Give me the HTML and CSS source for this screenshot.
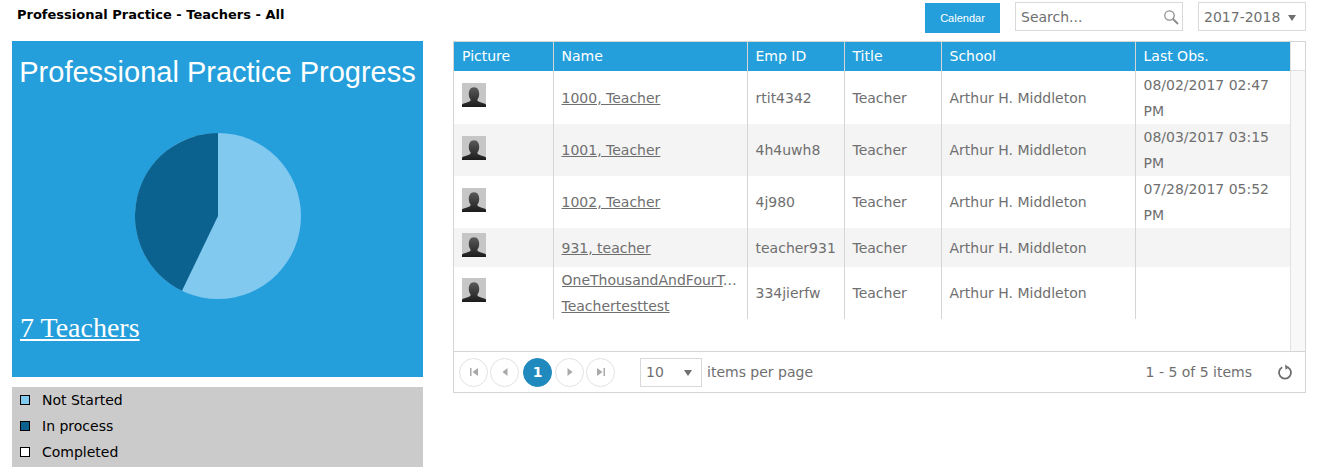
FILE: index.html
```html
<!DOCTYPE html>
<html lang="en">
<head>
<meta charset="utf-8">
<title>Professional Practice - Teachers - All</title>
<link rel="stylesheet" href="styles.css">
</head>
<body>
<svg class="defs" width="0" height="0" aria-hidden="true">
  <defs>
    <linearGradient id="sil" x1="0" y1="0" x2="0" y2="1">
      <stop offset="0" stop-color="#5a5a5a"/>
      <stop offset="1" stop-color="#1c1c1c"/>
    </linearGradient>
    <symbol id="avatar" viewBox="0 0 24 24">
      <rect width="24" height="24" fill="#c6c6c6"/>
      <path d="M0 24v-2.6c2-1.2 5-1.700 7.500-2.900 1-.5 1.300-1.300 1-2.200-1.100-1.300-1.700-3-1.700-5.300 0-4 1.700-6.800 5.200-6.800s5.200 2.800 5.200 6.800c0 2.300-.6 4-1.700 5.300-.3.900 0 1.700 1 2.200 2.500 1.200 5.500 1.700 7.500 2.900V24z" fill="url(#sil)"/>
    </symbol>
  </defs>
</svg>
<header class="topbar">
  <h1 class="page-title">Professional Practice - Teachers - All</h1>
  <div class="tools">
    <button class="calendar-btn" type="button">Calendar</button>
    <div class="search">
      <span class="search-text">Search...</span>
      <svg class="search-icon" viewBox="0 0 16 16" width="16" height="16"><circle cx="6.500" cy="6.500" r="4.700" fill="none" stroke="#8a8a8a" stroke-width="1.200"/><path d="M10 10l5 5" stroke="#8a8a8a" stroke-width="1.800"/></svg>
    </div>
    <div class="year-select"><span>2017-2018</span><span class="caret"></span></div>
  </div>
</header>
<main class="layout">
  <section class="left">
    <div class="progress-card">
      <h2 class="progress-title">Professional Practice Progress</h2>
      <svg class="pie" viewBox="0 0 166 166" width="166" height="166">
        <circle cx="83" cy="83" r="83" fill="#81c9ef"/>
        <path d="M83 83L47 157.800A83 83 0 0 1 83 0z" fill="#0b628f"/>
      </svg>
      <a class="teachers-link" href="#">7 Teachers</a>
    </div>
    <ul class="legend">
      <li class="legend-item"><span class="swatch swatch-light"></span>Not Started</li>
      <li class="legend-item"><span class="swatch swatch-dark"></span>In process</li>
      <li class="legend-item"><span class="swatch swatch-white"></span>Completed</li>
    </ul>
  </section>
  <section class="grid">
    <div class="grid-main">
      <div class="grid-tablewrap">
        <table class="teachers">
          <colgroup><col class="c1"><col class="c2"><col class="c3"><col class="c4"><col class="c5"><col class="c6"></colgroup>
          <thead>
            <tr><th>Picture</th><th>Name</th><th>Emp ID</th><th>Title</th><th>School</th><th>Last Obs.</th></tr>
          </thead>
          <tbody>
            <tr class="tall"><td class="pic"><svg class="avatar"><use href="#avatar"/></svg></td><td><a href="#">1000, Teacher</a></td><td>rtit4342</td><td>Teacher</td><td>Arthur H. Middleton</td><td>08/02/2017 02:47 PM</td></tr>
            <tr class="tall alt"><td class="pic"><svg class="avatar"><use href="#avatar"/></svg></td><td><a href="#">1001, Teacher</a></td><td>4h4uwh8</td><td>Teacher</td><td>Arthur H. Middleton</td><td>08/03/2017 03:15 PM</td></tr>
            <tr class="tall"><td class="pic"><svg class="avatar"><use href="#avatar"/></svg></td><td><a href="#">1002, Teacher</a></td><td>4j980</td><td>Teacher</td><td>Arthur H. Middleton</td><td>07/28/2017 05:52 PM</td></tr>
            <tr class="short alt"><td class="pic"><svg class="avatar"><use href="#avatar"/></svg></td><td><a href="#">931, teacher</a></td><td>teacher931</td><td>Teacher</td><td>Arthur H. Middleton</td><td></td></tr>
            <tr class="tall"><td class="pic"><svg class="avatar"><use href="#avatar"/></svg></td><td><a class="clip" href="#">OneThousandAndFourTeacher,</a><a href="#">Teachertesttest</a></td><td>334jierfw</td><td>Teacher</td><td>Arthur H. Middleton</td><td></td></tr>
          </tbody>
        </table>
      </div>
      <div class="scroll-col"><div class="scroll-head"></div><div class="scroll-track"></div></div>
    </div>
    <footer class="pager">
      <div class="pager-left">
        <span class="page-btn"><svg viewBox="0 0 10 10" width="10" height="10"><path d="M1 1h1.500v8H1zM9 1v8L3.500 5z"/></svg></span>
        <span class="page-btn"><svg viewBox="0 0 10 10" width="10" height="10"><path d="M7.500 1v8L2.500 5z"/></svg></span>
        <span class="page-btn current">1</span>
        <span class="page-btn"><svg viewBox="0 0 10 10" width="10" height="10"><path d="M2.500 1v8l5-4z"/></svg></span>
        <span class="page-btn"><svg viewBox="0 0 10 10" width="10" height="10"><path d="M1 1v8l5.500-4zM7.500 1H9v8H7.500z"/></svg></span>
        <div class="size-select"><span>10</span><span class="caret"></span></div>
        <span class="per-page">items per page</span>
      </div>
      <div class="pager-right">
        <span class="page-info">1 - 5 of 5 items</span>
        <svg class="refresh" viewBox="0 0 16 16" width="16" height="16"><path d="M5.200 3.300A6 6 0 1 0 10.800 3.300" fill="none" stroke="#6d6d6d" stroke-width="1.800"/><path d="M8 .5L12 3.300 8.600 5.800z" fill="#6d6d6d"/></svg>
      </div>
    </footer>
  </section>
</main>
</body>
</html>
```

FILE: styles.css
```css
* { box-sizing: border-box; }
html, body { margin: 0; padding: 0; }
body { width: 1317px; height: 475px; overflow: hidden; background: #fff; font-family: "DejaVu Sans", Verdana, sans-serif; color: #6f6f6f; }
.defs { position: absolute; }

.topbar { display: flex; justify-content: space-between; align-items: flex-start; height: 41px; padding: 2px 11px 0 17px; }
.page-title { margin: 5px 0 0; font-size: 13px; line-height: 15px; font-weight: 700; color: #000; }
.tools { display: flex; align-items: flex-start; }
.calendar-btn { width: 75px; height: 30px; margin: 1px 15px 0 0; padding: 0; border: 0; background: #259fdb; color: #fff; font: 11px/30px "Liberation Sans", Arial, sans-serif; }
.search { display: flex; justify-content: space-between; align-items: center; width: 168px; height: 29px; margin-right: 15px; padding: 0 3px 0 5px; border: 1px solid #d9d9d9; font-size: 14px; }
.search-text { color: #6f6f6f; }
.search-icon { display: block; }
.year-select { display: flex; justify-content: space-between; align-items: center; width: 108px; height: 29px; padding: 0 9px 0 5px; border: 1px solid #d9d9d9; font-size: 14px; }
.caret { width: 0; height: 0; border-style: solid; border-width: 6px 4.500px 0; border-color: #6f6f6f transparent transparent; margin-top: 2px; }

.layout { display: flex; align-items: flex-start; gap: 30px; padding: 0 11px 0 12px; }
.left { flex: 0 0 411px; }
.progress-card { display: flex; flex-direction: column; align-items: center; height: 336px; background: #259fdb; color: #fff; }
.progress-title { margin: 14px 0 0; font: 400 29px/34px "Liberation Sans", Arial, sans-serif; color: #fff; white-space: nowrap; }
.pie { display: block; margin-top: 44px; }
.teachers-link { align-self: flex-start; margin: 11px 0 0 8px; font: 28px/36px "Liberation Serif", "Times New Roman", serif; color: #fff; }
.legend { list-style: none; height: 80px; margin: 10px 0 0; padding: 0 8px; background: #cbcbcb; }
.legend-item { display: flex; align-items: center; height: 26px; font-size: 14px; color: #000; }
.swatch { width: 10px; height: 10px; margin-right: 12px; border: 1px solid #000; }
.swatch-light { background: #81c9ef; }
.swatch-dark { background: #0b628f; }
.swatch-white { background: #fff; }

.grid { flex: 0 0 853px; height: 352px; border: 1px solid #d5d5d5; }
.grid-main { display: flex; height: 310px; border-bottom: 1px solid #d5d5d5; }
.grid-tablewrap { flex: 0 0 836px; }
.teachers { width: 836px; table-layout: fixed; border-collapse: collapse; font-size: 14px; }
.c1 { width: 99px; }
.c2 { width: 194px; }
.c3 { width: 97px; }
.c4 { width: 97px; }
.c5 { width: 194px; }
.c6 { width: 155px; }
.teachers th { height: 29px; padding: 0 8px; background: #259fdb; color: #fff; font-weight: 400; text-align: left; border-left: 1px solid #d5d5d5; line-height: 29px; }
.teachers th:first-child, .teachers td:first-child { border-left: 0; }
.teachers td { padding: 0 8px; border-left: 1px solid #d5d5d5; line-height: 26px; vertical-align: middle; overflow: hidden; }
.tall td { height: 52px; }
.short td { height: 39px; }
.alt td { background: #f4f4f4; }
.teachers tbody tr:first-child td { height: 53px; }
.teachers td.pic { vertical-align: top; padding-top: 12px; }
.short td.pic { padding-top: 5px; }
.teachers tbody tr:last-child td.pic { padding-top: 11px; }
.avatar { display: block; width: 24px; height: 24px; }
.teachers a { color: #6f6f6f; display: block; white-space: nowrap; }
.clip { overflow: hidden; text-overflow: ellipsis; }
.scroll-col { flex: 1; display: flex; flex-direction: column; border-left: 1px solid #e2e2e2; }
.scroll-head { height: 29px; border-bottom: 1px solid #e2e2e2; }
.scroll-track { flex: 1; background: #f8f8f8; }

.pager { display: flex; justify-content: space-between; align-items: center; height: 40px; padding: 0 12px 0 5px; }
.pager-left, .pager-right { display: flex; align-items: center; }
.page-btn { display: flex; justify-content: center; align-items: center; width: 29px; height: 29px; margin-right: 2px; border: 1px solid #e2e2e2; border-radius: 50%; fill: #a9a9a9; }
.page-btn.current { width: 29px; margin: 0 3px 0 2px; border-color: #2089bd; background: #2089bd; color: #fff; font-weight: 700; font-size: 14px; }
.size-select { display: flex; justify-content: space-between; align-items: center; width: 62px; height: 29px; margin: 0 5px 0 23px; padding: 0 9px 0 5px; border: 1px solid #d9d9d9; font-size: 14px; }
.per-page, .page-info { font-size: 14px; }
.page-info { margin-right: 25px; }
.refresh { display: block; }
```
